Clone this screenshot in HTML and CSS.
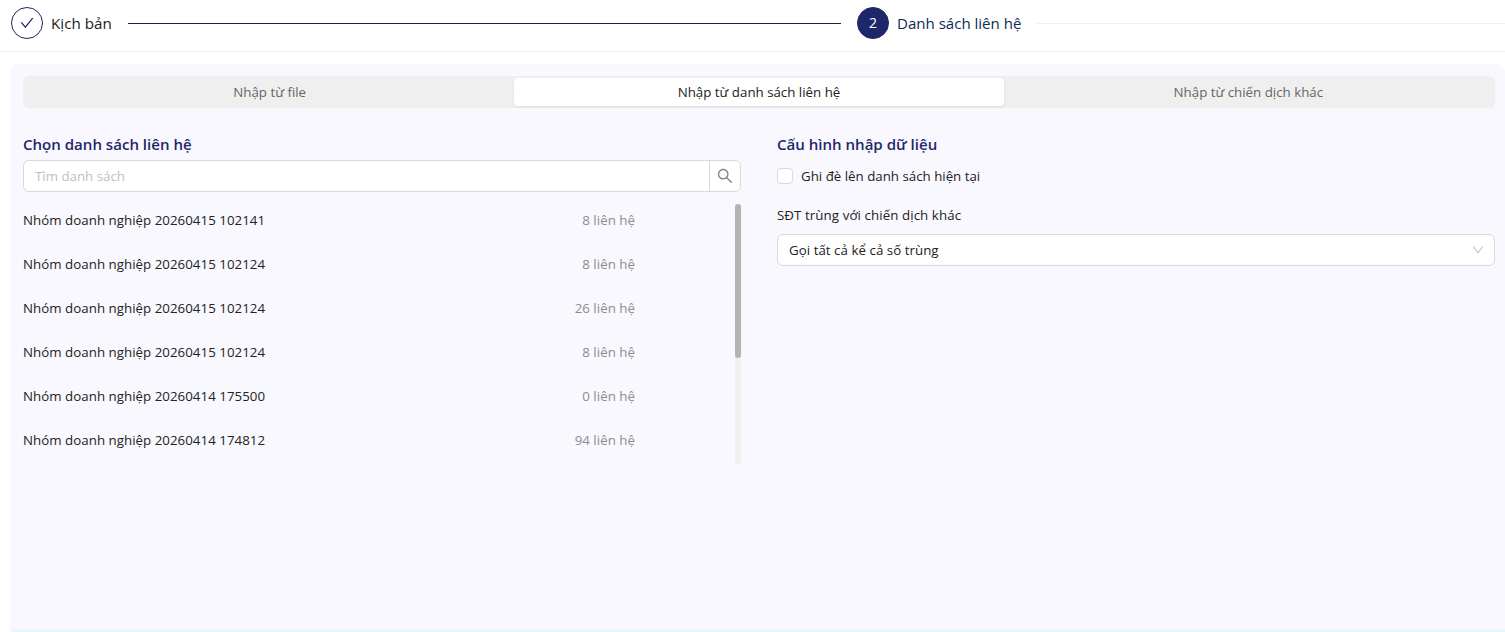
FILE: index.html
```html
<!DOCTYPE html>
<html lang="vi">
<head>
    <meta charset="UTF-8">
    <meta name="viewport" content="width=device-width, initial-scale=1.0">
    <title>Danh sách liên hệ</title>
    <link rel="stylesheet" href="styles.css">
</head>
<body>
    <div class="steps">
        <div class="step finish">
            <span class="step-icon">
                <svg viewBox="64 64 896 896" width="14" height="14" fill="currentColor"><path d="M912 190h-69.9c-9.8 0-19.1 4.5-25.1 12.2L404.7 724.5 207 474a32 32 0 00-25.1-12.2H112c-6.7 0-10.4 7.7-6.3 12.9l273.9 347c12.8 16.2 37.4 16.2 50.3 0l488.4-618.9c4.1-5.1.4-12.8-6.3-12.8z"/></svg>
            </span>
            <span class="step-title">Kịch bản</span>
            <span class="step-line"></span>
        </div>
        <div class="step active">
            <span class="step-icon">2</span>
            <span class="step-title">Danh sách liên hệ</span>
            <span class="step-line"></span>
        </div>
    </div>

    <div class="panel">
        <div class="tabs">
            <div class="tab">Nhập từ file</div>
            <div class="tab selected">Nhập từ danh sách liên hệ</div>
            <div class="tab">Nhập từ chiến dịch khác</div>
        </div>

        <div class="columns">
            <div class="column">
                <h2>Chọn danh sách liên hệ</h2>
                <div class="search">
                    <input type="text" placeholder="Tìm danh sách">
                    <button type="button" aria-label="Tìm">
                        <svg viewBox="64 64 896 896" width="16" height="16" fill="currentColor"><path d="M909.6 854.5L649.9 594.8C690.2 542.7 712 479 712 412c0-80.2-31.3-155.4-87.9-212.1-56.6-56.7-132-87.9-212.1-87.9s-155.5 31.3-212.1 87.9C143.2 256.5 112 331.8 112 412c0 80.1 31.3 155.5 87.9 212.1C256.5 680.8 331.8 712 412 712c67 0 130.6-21.8 182.7-62l259.7 259.6a8.2 8.2 0 0011.6 0l43.6-43.5a8.2 8.2 0 000-11.6zM570.4 570.4C528 612.7 471.8 636 412 636s-116-23.3-158.4-65.6C211.3 528 188 471.8 188 412s23.3-116.1 65.6-158.4C296 211.3 352.2 188 412 188s116.1 23.2 158.4 65.6S636 352.2 636 412s-23.3 116.1-65.6 158.4z"/></svg>
                    </button>
                </div>
                <div class="list-wrap">
                    <ul class="list">
                        <li><span>Nhóm doanh nghiệp 20260415 102141</span><span class="count">8 liên hệ</span></li>
                        <li><span>Nhóm doanh nghiệp 20260415 102124</span><span class="count">8 liên hệ</span></li>
                        <li><span>Nhóm doanh nghiệp 20260415 102124</span><span class="count">26 liên hệ</span></li>
                        <li><span>Nhóm doanh nghiệp 20260415 102124</span><span class="count">8 liên hệ</span></li>
                        <li><span>Nhóm doanh nghiệp 20260414 175500</span><span class="count">0 liên hệ</span></li>
                        <li><span>Nhóm doanh nghiệp 20260414 174812</span><span class="count">94 liên hệ</span></li>
                    </ul>
                    <div class="scrollbar"><div class="thumb"></div></div>
                </div>
            </div>

            <div class="column">
                <h2>Cấu hình nhập dữ liệu</h2>
                <label class="checkbox"><input type="checkbox"><span>Ghi đè lên danh sách hiện tại</span></label>
                <div class="field-label">SĐT trùng với chiến dịch khác</div>
                <div class="select">
                    <span>Gọi tất cả kể cả số trùng</span>
                    <svg viewBox="64 64 896 896" width="12" height="12" fill="currentColor"><path d="M884 256h-75c-5.1 0-9.9 2.5-12.9 6.6L512 654.2 227.9 262.6c-3-4.1-7.8-6.6-12.9-6.6h-75c-6.5 0-10.3 7.4-6.5 12.7l352.6 486.1c12.8 17.6 39 17.6 51.7 0l352.6-486.1c3.9-5.3.1-12.7-6.4-12.7z"/></svg>
                </div>
            </div>
        </div>
    </div>
    <div class="bottom-bar"></div>
</body>
</html>
```
FILE: styles.css
```css
* {
    box-sizing: border-box;
}
body {
    margin: 0;
    height: 100vh;
    overflow: hidden;
    display: flex;
    flex-direction: column;
    font-family: "Segoe UI", "Open Sans", "Noto Sans", sans-serif;
    font-size: 13.3px;
    line-height: 22px;
    color: #222;
    background: #fff;
}
svg {
    display: block;
}

/* steps */
.steps {
    display: flex;
    gap: 16px;
    height: 52px;
    padding: 7px 0 0 11px;
    border-bottom: 1px solid #f0f0f0;
    flex: none;
}
.step {
    display: flex;
    align-items: center;
    height: 32px;
}
.step.finish {
    width: 830px;
}
.step.active {
    flex: 1;
}
.step-icon {
    display: flex;
    align-items: center;
    justify-content: center;
    width: 32px;
    height: 32px;
    margin-right: 8px;
    border: 1px solid #1d2769;
    border-radius: 50%;
    font-size: 14px;
    color: #1d2769;
}
.active .step-icon {
    background: #1d2769;
    color: #fff;
}
.step-title {
    font-size: 15.2px;
    white-space: nowrap;
}
.active .step-title {
    font-size: 15.05px;
    color: #0d2a54;
}
.step-line {
    flex: 1;
    height: 1px;
    margin-left: 16px;
    background: #f0f0f0;
}
.finish .step-line {
    background: #1f2140;
}

/* panel */
.panel {
    flex: 1;
    margin: 12px 0 0 10px;
    padding: 12px 10px 0 13px;
    background: #f9f8ff;
    border-radius: 8px 8px 0 0;
}
.bottom-bar {
    flex: none;
    height: 3px;
    margin-left: 11px;
    background: #e6f7ff;
}
.tabs {
    display: flex;
    height: 32px;
    padding: 2px;
    background: #efefef;
    border-radius: 6px;
}
.tab {
    flex: 1;
    line-height: 28px;
    text-align: center;
    color: #666;
    border-radius: 4px;
}
.tab.selected {
    background: #fff;
    color: #222;
    box-shadow: 0 1px 3px rgba(0, 0, 0, 0.08);
}
.columns {
    display: grid;
    grid-template-columns: 1fr 1fr;
    gap: 36px;
    padding-top: 24px;
}
h2 {
    margin: 0;
    height: 28px;
    font-size: 15.05px;
    font-weight: 600;
    line-height: 25px;
    color: #1d2769;
}

/* search */
.search {
    display: flex;
    height: 32px;
    border: 1px solid #d9d9d9;
    border-radius: 6px;
    background: #fff;
    overflow: hidden;
}
.search input {
    flex: 1;
    border: 0;
    padding: 0 11px;
    font: inherit;
    background: none;
}
.search input::placeholder {
    color: #bfbfbf;
}
.search button {
    display: flex;
    align-items: center;
    justify-content: center;
    width: 31px;
    padding: 0;
    border: 0;
    border-left: 1px solid #d9d9d9;
    background: #fff;
    color: #858585;
}

/* list */
.list-wrap {
    display: flex;
    justify-content: space-between;
    height: 260px;
    margin-top: 12px;
}
.list {
    width: 612px;
    margin: 0;
    padding: 0;
    list-style: none;
    letter-spacing: 0.03px;
}
.list li {
    display: flex;
    justify-content: space-between;
    height: 44px;
    line-height: 32px;
}
.count {
    color: #8c8c8c;
}
.scrollbar {
    width: 6px;
    background: #f1f1f1;
}
.thumb {
    height: 154px;
    border-radius: 3px;
    background: #b3b3b3;
}

/* import config */
.checkbox {
    display: flex;
    align-items: center;
    gap: 8px;
    height: 32px;
}
.checkbox input {
    appearance: none;
    width: 16px;
    height: 16px;
    margin: 0;
    border: 1px solid #d9d9d9;
    border-radius: 4px;
    background: #fff;
}
.field-label {
    margin: 12px 0 8px;
    letter-spacing: 0.08px;
}
.select {
    display: flex;
    align-items: center;
    justify-content: space-between;
    height: 32px;
    padding: 0 10px 0 11px;
    border: 1px solid #d9d9d9;
    border-radius: 6px;
    background: #fff;
    letter-spacing: 0.04px;
}
.select svg {
    color: #bfbfbf;
}
```
